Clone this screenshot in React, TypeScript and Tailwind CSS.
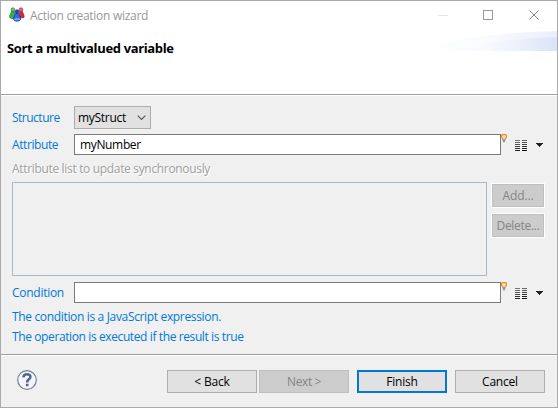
import React from "react";

const label = "whitespace-nowrap text-[#0078d7] leading-4 h-4";

function People() {
  return (
    <svg width="16" height="15" viewBox="0 0 16 15" className="shrink-0">
      <path d="M2.8 4L.7 9Q.3 11.7 4 11.5L6 9L5 4Z" fill="#35b344" stroke="#176f2b" strokeWidth=".7" />
      <circle cx="3.9" cy="2.6" r="1.8" fill="#63cf6c" stroke="#237c35" strokeWidth=".7" />
      <path d="M11 4L10 9Q12 11.5 15 10.6Q15.8 8.6 13 4Z" fill="#db2638" stroke="#912037" strokeWidth=".7" />
      <circle cx="12" cy="2.6" r="1.8" fill="#ef6670" stroke="#a62b39" strokeWidth=".7" />
      <path d="M7 6L4.4 11Q4 14 8 14.2Q12 14 11.8 11L9 6Z" fill="#3068df" stroke="#173b9c" strokeWidth=".7" />
      <circle cx="8" cy="4.7" r="2" fill="#2944b8" stroke="#17277e" strokeWidth=".6" />
      <ellipse cx="8" cy="12.2" rx="2.9" ry="1.1" fill="#7aa6f7" />
    </svg>
  );
}

function Bulb() {
  return (
    <svg width="6" height="9" viewBox="0 0 6 9" className="shrink-0">
      <path d="M1 0H5L6 1V3.5L4.5 5.5H1.5L0 3.5V1Z" fill="#ed902d" />
      <path d="M1.6 1.2H4.4L4.9 3L3.8 4.8H2.2L1.1 3Z" fill="#ffe3b3" />
      <path d="M1.7 5H4.3V7.5H3.7V8.5H2.3V7.5H1.7Z" fill="#8c949e" />
    </svg>
  );
}

function ListIcon() {
  const rows = ["#777", "#666", "#555", "#444", "#333", "#222", "#111"];
  return (
    <svg width="12" height="11" viewBox="0 0 12 11" shapeRendering="crispEdges" className="mt-[6px] ml-2 shrink-0">
      {rows.slice(0, 6).map((c, i) => (
        <g key={i}>
          <rect x="0" y={i * 2} width="5" height="1" fill={c} />
          <rect x="7" y={i * 2} width="5" height="1" fill={rows[i + 1]} />
        </g>
      ))}
    </svg>
  );
}

function Expression({ name, value, tracking }: { name: string; value: string; tracking: string }) {
  return (
    <div className="flex h-[21px]">
      <span className={`${label} ${tracking} mt-[3px] w-[62px]`}>{name}</span>
      <div className="h-[21px] w-[427px] border border-[#7a7a7a] bg-white pl-[5px] leading-[19px] tracking-[-0.35px] text-black">{value}</div>
      <Bulb />
      <ListIcon />
      <svg width="7" height="4" viewBox="0 0 7 4" shapeRendering="crispEdges" className="mt-[9px] ml-[9px]">
        <path d="M0 0H7V1H6V2H5V3H4V4H3V3H2V2H1V1H0Z" fill="#222" />
      </svg>
    </div>
  );
}

export default function App() {
  return (
    <div className="flex h-[408px] w-[558px] flex-col overflow-hidden border border-[#aaaaaa] bg-[#f0f0f0] font-['Open_Sans',sans-serif] text-[12px]">
      <header className="relative h-[93px] shrink-0 bg-white">
        <svg className="absolute top-[29px] right-0" width="140" height="21" viewBox="0 0 140 21">
          <defs>
            <linearGradient id="wave">
              <stop offset="0" stopColor="#fff" />
              <stop offset="0.5" stopColor="#f9fbff" />
              <stop offset="1" stopColor="#e9effb" />
            </linearGradient>
            <linearGradient id="waveLow">
              <stop offset="0" stopColor="#fff" stopOpacity="0" />
              <stop offset="1" stopColor="#dae3f7" />
            </linearGradient>
          </defs>
          <path d="M0 21Q52 3 140 1V21Z" fill="url(#wave)" />
          <path d="M35 21Q83 8 140 7V21Z" fill="url(#waveLow)" />
        </svg>
        <div className="flex h-[30px] items-start">
          <div className="mt-[6px] ml-2"><People /></div>
          <span className="mt-[7px] ml-[5px] h-4 leading-4 tracking-[-0.28px] whitespace-nowrap text-[#999]">Action creation wizard</span>
          <svg width="102" height="11" viewBox="0 0 102 11" shapeRendering="crispEdges" className="mt-[9px] mr-[17px] ml-auto">
            <path d="M0 5.5H10" stroke="#e6e6e6" />
            <rect x="45.5" y=".5" width="9" height="9" fill="none" stroke="#999" />
            <path d="M91.5 .5L100.5 9.5M100.5 .5L91.5 9.5" stroke="#888" shapeRendering="auto" />
          </svg>
        </div>
        <h1 className="mt-[9px] ml-[6px] h-4 text-[13px] leading-4 font-bold tracking-[-0.35px] whitespace-nowrap text-black">Sort a multivalued variable</h1>
      </header>
      <main className="flex h-[260px] shrink-0 flex-col border-t border-[#a0a0a0] pl-[11px] shadow-[inset_0_1px_0_white]">
        <div className="mt-[11px] flex h-[23px]">
          <span className={`${label} mt-1 w-[62px] tracking-[-0.5px]`}>Structure</span>
          <div className="flex h-[23px] w-[77px] items-center border border-[#adadad] bg-[#e1e1e1] pl-[3px] text-black">
            <span className="tracking-[-0.3px]">myStruct</span>
            <svg width="9" height="6" viewBox="0 0 9 6" className="mr-1 ml-auto"><path d="M.7 .7L4.5 4.5L8.3 .7" fill="none" stroke="#555" strokeWidth="1.1" /></svg>
          </div>
        </div>
        <div className="mt-[5px]"><Expression name="Attribute" value="myNumber" tracking="tracking-[-0.4px]" /></div>
        <span className="mt-[6px] h-4 leading-4 tracking-[-0.33px] whitespace-nowrap text-[#a0a0a0] [text-shadow:1px_1px_0_white]">Attribute list to update synchronously</span>
        <div className="mt-[5px] flex h-[94px]">
          <div className="h-[94px] w-[475px] border border-[#abb8c5]" />
          <div className="mt-px ml-1 flex flex-col gap-[5px] text-[#858585]">
            <div className="flex h-[25px] w-[54px] items-center justify-center border border-white bg-[#ccc] tracking-[-0.1px] shadow-[inset_0_0_0_1px_#bfbfbf]">Add...</div>
            <div className="flex h-[25px] w-[54px] items-center justify-center border border-white bg-[#ccc] tracking-[-0.3px] shadow-[inset_0_0_0_1px_#bfbfbf]">Delete...</div>
          </div>
        </div>
        <div className="mt-[6px]"><Expression name="Condition" value="" tracking="tracking-[-0.27px]" /></div>
        <span className={`${label} mt-[6px] tracking-[-0.34px]`}>The condition is a JavaScript expression.</span>
        <span className={`${label} mt-1 tracking-[-0.39px]`}>The operation is executed if the result is true</span>
      </main>
      <footer className="flex min-h-0 flex-1 border-t border-[#a0a0a0] pt-[15px] pl-4 shadow-[inset_0_1px_0_white]">
        <svg width="20" height="20" viewBox="0 0 20 20" className="mr-[130px] shrink-0">
          <circle cx="10" cy="10" r="9.3" fill="#f4f5f7" stroke="#6d7f9b" strokeWidth="1.2" />
          <path d="M6.3 7.4Q6.7 4.3 10 4.3Q13.5 4.3 13.4 7Q13.3 8.6 11.5 9.6Q10.2 10.4 10.2 12.4" fill="none" stroke="#52688d" strokeWidth="2.6" />
          <rect x="8.9" y="13.7" width="2.6" height="2.5" fill="#52688d" />
        </svg>
        <div className="flex h-[23px] w-[90px] items-center justify-center border border-[#adadad] bg-[#e1e1e1] tracking-[-0.2px] text-black">&lt; Back</div>
        <div className="ml-[2px] flex h-[23px] w-[90px] items-center justify-center border border-[#bfbfbf] bg-[#ccc] tracking-[-0.4px] text-[#858585]">Next &gt;</div>
        <div className="ml-2 flex h-[23px] w-[90px] items-center justify-center border-2 border-[#0078d7] bg-[#e1e1e1] tracking-[-0.2px] text-black">Finish</div>
        <div className="ml-2 flex h-[23px] w-[90px] items-center justify-center border border-[#adadad] bg-[#e1e1e1] tracking-[-0.2px] text-black">Cancel</div>
      </footer>
    </div>
  );
}
